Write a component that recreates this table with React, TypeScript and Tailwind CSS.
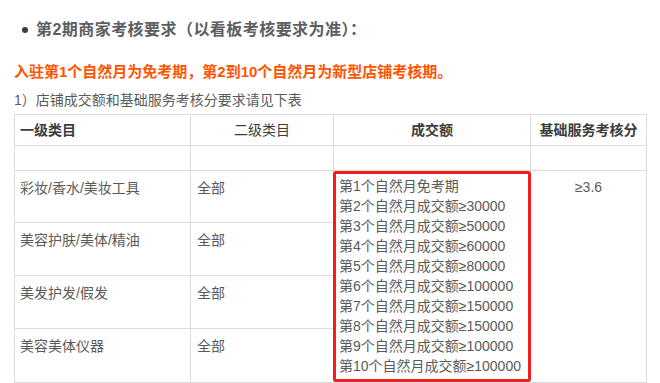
import React from "react";

const FONT = { fontFamily: '"Liberation Sans", "Noto Sans CJK SC", sans-serif' };

const categories = ["彩妆/香水/美妆工具", "美容护肤/美体/精油", "美发护发/假发", "美容美体仪器"];

const steps = [
  "第1个自然月免考期",
  "第2个自然月成交额≥30000",
  "第3个自然月成交额≥50000",
  "第4个自然月成交额≥60000",
  "第5个自然月成交额≥80000",
  "第6个自然月成交额≥100000",
  "第7个自然月成交额≥150000",
  "第8个自然月成交额≥150000",
  "第9个自然月成交额≥100000",
  "第10个自然月成交额≥100000",
];

const rowStart = ["row-start-3", "row-start-4", "row-start-5", "row-start-6"];

export default function App() {
  return (
    <div className="w-[660px] h-[383px] bg-white overflow-hidden pl-[14px] pt-[18px]" style={FONT}>
      <div className="flex items-center h-[24px] text-[16px] font-bold text-[#5b5e63]">
        <span className="w-[22px] flex justify-center">
          <span className="w-[6px] h-[6px] rounded-full bg-[#3a3a3a]" />
        </span>
        <span className="tracking-[0.45px]">第2期商家考核要求（以看板考核要求为准）：</span>
      </div>

      <p className="mt-[19px] h-[22px] leading-[22px] text-[15px] font-bold text-[#ff5400]">
        入驻第1个自然月为免考期，第2到10个自然月为新型店铺考核期。
      </p>

      <p className="mt-[7px] h-[20px] leading-[20px] text-[14px] text-[#5a5a5a]">
        1）店铺成交额和基础服务考核分要求请见下表
      </p>

      <div className="mt-[4px] w-fit grid grid-cols-[175px_142px_196px_115px] grid-rows-[30px_24px_51px_52px_52px_53px] gap-px p-px bg-[#dddddd] text-[14px] leading-[20px] text-[#5a5a5a]">
        <div className="bg-white flex items-center pl-[5px] font-bold text-[#3c3c3c]">一级类目</div>
        <div className="bg-white flex items-center justify-center text-[#3c3c3c]">二级类目</div>
        <div className="bg-white flex items-center justify-center font-bold text-[#3c3c3c]">成交额</div>
        <div className="bg-white flex items-center justify-center font-bold text-[#3c3c3c]">基础服务考核分</div>

        <div className="bg-white" />
        <div className="bg-white" />
        <div className="bg-white" />
        <div className="bg-white" />

        {categories.map((c, i) => (
          <React.Fragment key={c}>
            <div className={`bg-white col-start-1 pl-[5px] pt-[7px] ${rowStart[i]}`}>{c}</div>
            <div className={`bg-white col-start-2 pl-[6px] pt-[7px] ${rowStart[i]}`}>全部</div>
          </React.Fragment>
        ))}

        <div className="col-start-3 row-start-3 row-span-4 bg-white -mx-px border-[3px] border-[#f31d1d] rounded-[3px] pl-[3px] pt-[2px]">
          {steps.map((s) => (
            <div key={s} className="h-[20px] whitespace-nowrap">
              {s}
            </div>
          ))}
        </div>

        <div className="col-start-4 row-start-3 row-span-4 bg-white text-center pt-[6px]">≥3.6</div>
      </div>
    </div>
  );
}
